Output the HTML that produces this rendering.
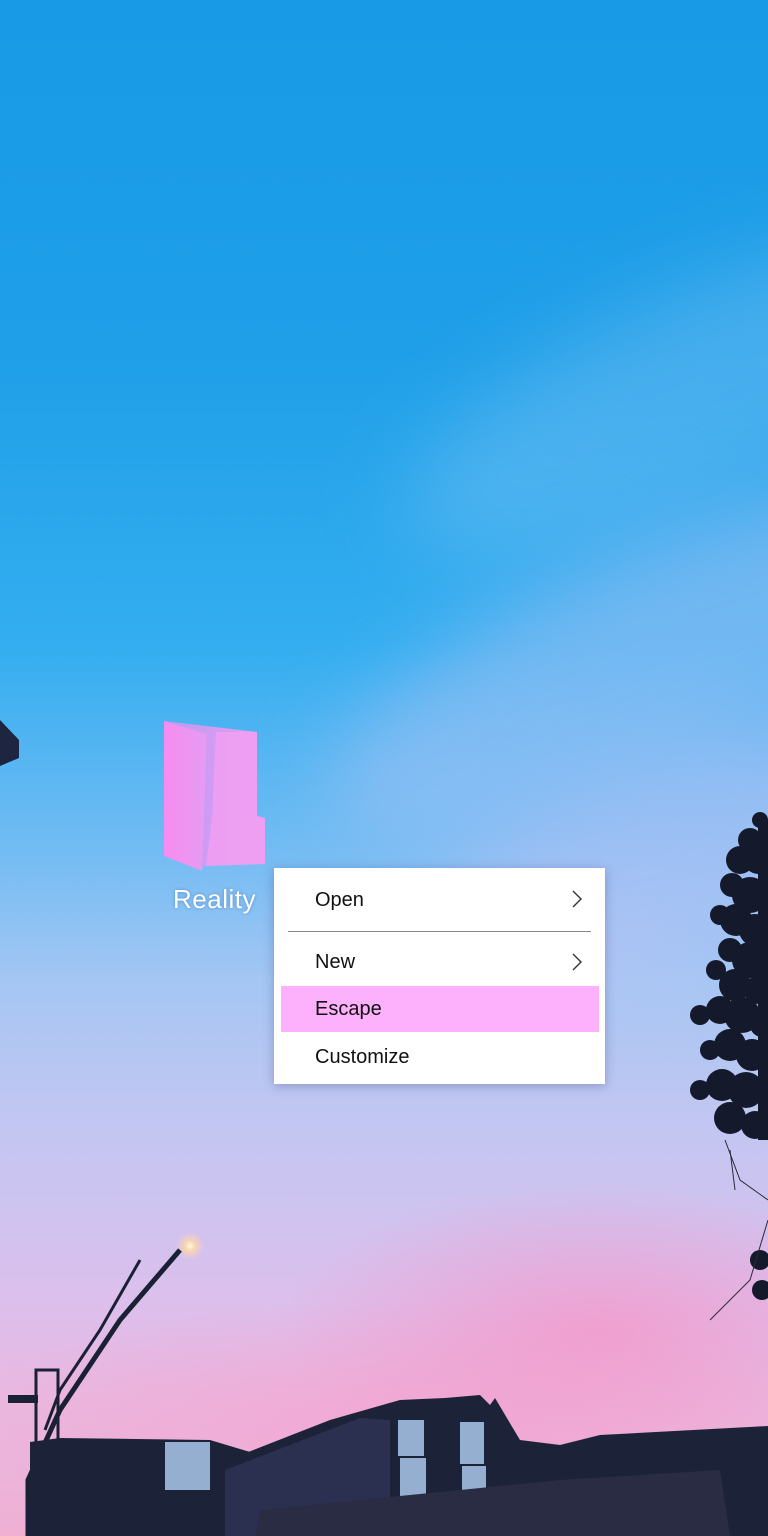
<!DOCTYPE html>
<html><head><meta charset="utf-8"><style>
html,body{margin:0;padding:0}
body{width:768px;height:1536px;position:relative;overflow:hidden;font-family:"Liberation Sans",sans-serif;
background:
radial-gradient(ellipse 320px 150px at 600px 1330px, rgba(245,150,200,0.75), rgba(245,150,200,0) 100%),
radial-gradient(ellipse 420px 120px at 380px 1420px, rgba(246,160,205,0.6), rgba(246,160,205,0) 100%),
linear-gradient(180deg,#189ae6 0px,#1f9fe8 350px,#34aef0 650px,#72bcf3 850px,#a4c6f3 980px,#bfc6f2 1100px,#cdc4f0 1200px,#dcbfec 1300px,#e9b8e0 1400px,#efb0d4 1536px);}
.haze{position:absolute;filter:blur(40px);border-radius:50%}
.menu{position:absolute;left:274px;top:868px;width:331px;height:216px;background:#fff;box-shadow:0 2px 10px rgba(60,60,120,0.35)}
.it{position:absolute;left:41px;font-size:20px;color:#111;line-height:24px}
.chev{position:absolute;left:298px;width:10px;height:18px}
</style></head><body>
<div class="haze" style="left:380px;top:300px;width:600px;height:200px;background:rgba(140,200,245,0.35);transform:rotate(-25deg)"></div>
<div class="haze" style="left:300px;top:550px;width:700px;height:220px;background:rgba(175,195,245,0.5);transform:rotate(-25deg)"></div>
<div class="haze" style="left:400px;top:750px;width:600px;height:200px;background:rgba(200,195,245,0.5);transform:rotate(-20deg)"></div>

<svg style="position:absolute;left:0;top:718px" width="22" height="50"><polygon points="0,2 19,22 19,40 0,48" fill="#1e2540"/></svg>

<svg style="position:absolute;left:160px;top:718px" width="112" height="156">
<defs><linearGradient id="g1" x1="0" x2="1"><stop offset="0" stop-color="#f78cf0"/><stop offset="1" stop-color="#e49cf2"/></linearGradient>
<linearGradient id="g2" x1="0" x2="1"><stop offset="0" stop-color="#b59cf2"/><stop offset="1" stop-color="#ee9cf2"/></linearGradient></defs>
<polygon points="4,3 97,14 97,98 105,100 105,146 44,148 38,150 4,138" fill="url(#g2)"/>
<polygon points="4,3 47,16 42,153 4,138" fill="url(#g1)"/>
<polygon points="56,14 97,14 97,98 105,100 105,146 46,148 52,100" fill="#eea0f2" opacity="0.9"/>
</svg>
<div style="position:absolute;left:173px;top:884px;font-size:26px;color:#fff;letter-spacing:0.5px;text-shadow:0 0 3px rgba(0,60,140,0.4)">Reality</div>

<div class="menu">
<div class="it" style="top:20px">Open</div>
<svg class="chev" style="top:22px" viewBox="0 0 10 18"><polyline points="1,1 9,9 1,17" fill="none" stroke="#333" stroke-width="1.4"/></svg>
<div style="position:absolute;left:14px;top:63px;width:303px;height:1px;background:#888"></div>
<div class="it" style="top:82px">New</div>
<svg class="chev" style="top:85px" viewBox="0 0 10 18"><polyline points="1,1 9,9 1,17" fill="none" stroke="#333" stroke-width="1.4"/></svg>
<div style="position:absolute;left:7px;top:118px;width:318px;height:46px;background:#fdb0fb"></div>
<div class="it" style="top:129px">Escape</div>
<div class="it" style="top:177px">Customize</div>
</div>

<!-- tree -->
<svg style="position:absolute;left:670px;top:800px" width="98" height="560">
<g fill="#141a2c">
<circle cx="90" cy="20" r="8"/><circle cx="80" cy="40" r="12"/><circle cx="70" cy="60" r="14"/><circle cx="88" cy="60" r="14"/>
<circle cx="62" cy="85" r="12"/><circle cx="80" cy="95" r="18"/><circle cx="50" cy="115" r="10"/><circle cx="66" cy="120" r="16"/>
<circle cx="85" cy="130" r="16"/><circle cx="60" cy="150" r="12"/><circle cx="80" cy="160" r="18"/><circle cx="46" cy="170" r="10"/>
<circle cx="65" cy="185" r="16"/><circle cx="88" cy="190" r="14"/><circle cx="30" cy="215" r="10"/><circle cx="50" cy="210" r="14"/>
<circle cx="72" cy="215" r="18"/><circle cx="92" cy="225" r="12"/><circle cx="60" cy="245" r="16"/><circle cx="82" cy="255" r="16"/>
<circle cx="40" cy="250" r="10"/><circle cx="30" cy="290" r="10"/><circle cx="52" cy="285" r="16"/><circle cx="76" cy="290" r="18"/>
<circle cx="60" cy="318" r="16"/><circle cx="85" cy="325" r="14"/><circle cx="90" cy="460" r="10"/><circle cx="92" cy="490" r="10"/>
<rect x="88" y="20" width="10" height="320"/>
</g>
<g stroke="#2a2a3a" fill="none" stroke-width="1"><path d="M55,340 L70,380 L98,400"/><path d="M60,350 L65,390"/><path d="M98,420 L80,480 L40,520"/></g>
</svg>

<svg style="position:absolute;left:0;top:1230px" width="768" height="306">
<defs><radialGradient id="lt"><stop offset="0" stop-color="#fff8e0"/><stop offset="0.4" stop-color="#ffd8a0" stop-opacity="0.8"/><stop offset="1" stop-color="#ffd0c0" stop-opacity="0"/></radialGradient></defs>
<circle cx="190" cy="16" r="14" fill="url(#lt)"/>
<path d="M28,306 L28,250 L60,180 L120,90 L180,20" stroke="#1a2035" stroke-width="5" fill="none"/>
<path d="M45,200 L60,160 L100,100 L140,30" stroke="#1a2035" stroke-width="3" fill="none"/>
<rect x="36" y="140" width="22" height="166" fill="none" stroke="#1a2035" stroke-width="3"/>
<rect x="8" y="165" width="30" height="8" fill="#1a2035"/>
<circle cx="322" cy="235" r="8" fill="url(#lt)"/>
<path d="M325,236 Q370,260 400,306" stroke="#202638" stroke-width="2" fill="none"/>
<g fill="#1c2338">
<polygon points="30,306 30,212 60,208 210,210 260,225 260,306"/>
<polygon points="215,306 215,235 330,190 400,170 445,168 480,165 490,175 495,168 520,210 560,215 600,205 768,196 768,306"/>
</g>
<g fill="#2c3050"><polygon points="225,306 225,240 360,188 390,190 390,306"/></g>
<g fill="#a9c8ea" opacity="0.85"><rect x="398" y="190" width="26" height="36"/><rect x="400" y="228" width="26" height="48"/><rect x="460" y="192" width="24" height="42"/><rect x="462" y="236" width="24" height="40"/><rect x="165" y="212" width="45" height="48"/></g>
<polygon points="255,306 260,280 560,250 720,240 730,306" fill="#2a2c44"/>
</svg>
</body></html>
